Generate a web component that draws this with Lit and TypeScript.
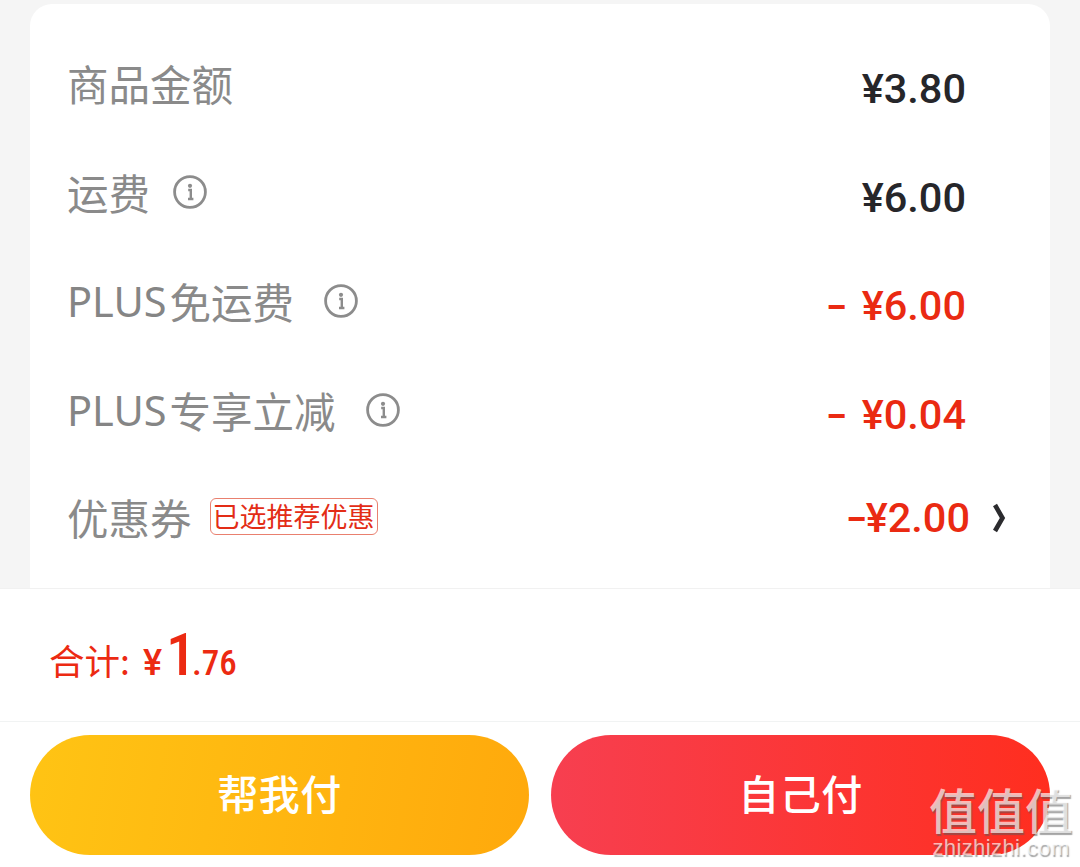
import { LitElement, html, css, svg } from "lit";
import { customElement } from "lit/decorators.js";

const info = svg`<svg class="info" viewBox="0 0 34 34" width="34" height="34" aria-hidden="true">
  <circle cx="17" cy="17" r="15.4" fill="none" stroke="#8c8c8c" stroke-width="2.8"/>
  <circle cx="17" cy="10.8" r="2.1" fill="#8c8c8c"/>
  <path d="M15.2 15h2.6v8.4M15 24h5.4" fill="none" stroke="#8c8c8c" stroke-width="2.4"/>
</svg>`;

@customElement("app-root")
export class AppRoot extends LitElement {
  static styles = css`
    :host {
      display: flex;
      flex-direction: column;
      height: 867px;
      width: 1080px;
      overflow: hidden;
      position: relative;
      background: #f5f5f5;
      font-family: "Noto Sans CJK SC", "Noto Sans", sans-serif;
    }
    .card {
      box-sizing: border-box;
      height: 584px;
      margin: 4px 30px 0;
      padding: 29px 84px 0 37px;
      background: #fff;
      border-radius: 22px 22px 0 0;
    }
    .row {
      display: flex;
      align-items: center;
      justify-content: space-between;
      height: 109px;
    }
    .row.coupon {
      height: 95px;
      margin-right: -42px;
      margin-top: 1px;
    }
    .label {
      display: flex;
      align-items: center;
      font-size: 41.5px;
      font-weight: 400;
      line-height: 56px;
      color: #8a8a8a;
      transform: translateY(-5px);
    }
    .coupon .label { transform: translateY(-1px); }
    .label .latin {
      font-family: "Noto Sans", "Noto Sans CJK SC", sans-serif;
      font-size: 41.5px;
      font-weight: 400;
      color: #858585;
      margin-right: 3px;
    }
    .info { margin-left: 23px; }
    .latin ~ .info { margin-left: 30px; }
    .amount {
      font-family: Roboto, "Liberation Sans", sans-serif;
      font-weight: 500;
      font-size: 41.5px;
      line-height: 56px;
      color: #26262a;
      transform: translateY(1px);
      white-space: nowrap;
    }
    .red { color: #ea2a12; }
    .minus {
      font-size: 31px;
      font-weight: 900;
      margin-right: 16px;
      vertical-align: 2px;
    }
    .coupon .minus { margin-right: 0; }
    .tag {
      box-sizing: border-box;
      margin-left: 18px;
      height: 37px;
      width: 168px;
      border: 1px solid #e9806f;
      border-radius: 6px;
      color: #e32d16;
      font-size: 27px;
      font-weight: 400;
      line-height: 33px;
      text-align: center;
      white-space: nowrap;
    }
    .right {
      display: flex;
      align-items: center;
      gap: 22px;
    }
    .chev { display: block; }
    .bottom {
      flex: 1;
      background: #fff;
      border-top: 1px solid #f1f1f1;
      display: flex;
      flex-direction: column;
    }
    .total {
      box-sizing: border-box;
      height: 133px;
      border-bottom: 1px solid #f1f3f3;
      display: flex;
      align-items: baseline;
      padding: 30px 0 0 49px;
      color: #ec2a12;
      font-weight: 400;
    }
    .total .t { font-size: 35.5px; }
    .total .cur { font-family: Roboto, sans-serif; font-size: 36px; font-weight: 500; margin-left: 13px; }
    .total .big { font-family: Roboto, sans-serif; font-stretch: condensed; font-size: 60px; font-weight: 500; margin-left: 4px; letter-spacing: -4px; }
    .total .dec { font-family: Roboto, sans-serif; font-stretch: condensed; font-size: 35px; font-weight: 500; }
    .buttons {
      display: flex;
      gap: 22px;
      padding: 13px 30px 0;
    }
    .btn {
      box-sizing: border-box;
      flex: 1;
      height: 120px;
      padding-bottom: 6px;
      border-radius: 60px;
      color: #fff;
      font-size: 41px;
      font-weight: 500;
      letter-spacing: 0.5px;
      display: flex;
      align-items: center;
      justify-content: center;
    }
    .help { background: linear-gradient(100deg, #ffc414, #ffa90c); }
    .self { background: linear-gradient(90deg, #f73f50, #ff2e1f); }
    .wm {
      position: absolute;
      left: 928px;
      top: 781px;
      width: 146px;
      color: rgba(255, 255, 255, 0.68);
      text-shadow: 1px 2px 1px rgba(90, 90, 90, 0.55);
      text-align: center;
      pointer-events: none;
    }
    .wm .zh {
      font-size: 48px;
      font-weight: 500;
      line-height: 54px;
      white-space: nowrap;
    }
    .wm .en {
      font-family: "Liberation Sans", sans-serif;
      font-size: 22px;
      line-height: 26px;
      letter-spacing: 0.4px;
      white-space: nowrap;
    }
  `;

  render() {
    return html`
      <section class="card">
        <div class="row">
          <div class="label">商品金额</div>
          <div class="amount">¥3.80</div>
        </div>
        <div class="row">
          <div class="label">运费${info}</div>
          <div class="amount">¥6.00</div>
        </div>
        <div class="row">
          <div class="label"><span class="latin">PLUS</span>免运费${info}</div>
          <div class="amount red"><span class="minus">–</span>¥6.00</div>
        </div>
        <div class="row">
          <div class="label"><span class="latin">PLUS</span>专享立减${info}</div>
          <div class="amount red"><span class="minus">–</span>¥0.04</div>
        </div>
        <div class="row coupon">
          <div class="label">优惠券<span class="tag">已选推荐优惠</span></div>
          <div class="right">
            <div class="amount red"><span class="minus">–</span>¥2.00</div>
            <svg class="chev" viewBox="0 0 16 30" width="16" height="30" aria-hidden="true">
              <path d="M3 2 L10.5 15 L3 28" fill="none" stroke="#2b2b2e" stroke-width="4.6"/>
            </svg>
          </div>
        </div>
      </section>
      <section class="bottom">
        <div class="total">
          <span class="t">合计:</span><span class="cur">¥</span><span class="big">1</span><span class="dec">.76</span>
        </div>
        <div class="buttons">
          <div class="btn help">帮我付</div>
          <div class="btn self">自己付</div>
        </div>
      </section>
      <div class="wm">
        <div class="zh">值值值</div>
        <div class="en">zhizhizhi.com</div>
      </div>
    `;
  }
}
